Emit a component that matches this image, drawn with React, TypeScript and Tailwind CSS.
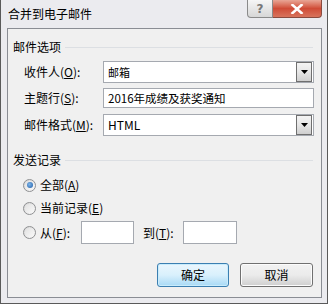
import React from "react";

function Arrow() {
  return (
    <div className="w-[16px] h-full border border-[#6f6f6f] bg-gradient-to-b from-[#f4f4f4] via-[#e6e6e6] to-[#cfcfcf] flex items-center justify-center">
      <svg width="7" height="4" viewBox="0 0 7 4">
        <path d="M0 0 L7 0 L3.5 4 Z" fill="#000" />
      </svg>
    </div>
  );
}

function Radio({ checked }: { checked?: boolean }) {
  return (
    <div className="w-[13px] h-[13px] rounded-full border border-[#8f9092] bg-gradient-to-br from-[#d6d6d6] to-[#fbfbfb] flex items-center justify-center">
      <div className="w-[9px] h-[9px] rounded-full bg-gradient-to-br from-[#e2e2e2] to-[#f8f8f8] flex items-center justify-center">
        {checked && (
          <div className="w-[6px] h-[6px] rounded-full bg-[radial-gradient(circle_at_40%_40%,#7fb6ea,#1c5ba6)]" />
        )}
      </div>
    </div>
  );
}

export default function App() {
  return (
    <div className="w-[329px] h-[305px] bg-white font-['Noto_Sans_CJK_SC',sans-serif] text-black">
      <div className="w-[328px] h-[304px] bg-[#ebebef] border-x border-b border-[#5a5a5a] flex flex-col">
        {/* Title bar */}
        <div className="h-[28px] flex items-start">
          <div className="pl-[7px] pt-[6px] text-[12px] leading-[16px]">合并到电子邮件</div>
          <div className="ml-auto mr-[5px] flex">
            <div className="w-[26px] h-[18px] border border-t-0 border-[#8a8a8a] rounded-bl-[4px] bg-gradient-to-b from-[#f6f6f6] to-[#d7d7d7] flex items-center justify-center text-[12px] leading-none text-[#777] font-bold font-['DejaVu_Sans',sans-serif]">
              ?
            </div>
            <div className="w-[49px] h-[18px] border border-t-0 border-l-0 border-[#8a4a3e] rounded-br-[4px] bg-gradient-to-b from-[#e8a595] via-[#cf4b36] to-[#d8735c] flex items-center justify-center">
              <svg width="14" height="10" viewBox="0 0 14 10">
                <path d="M2.5 1 L11.5 9 M11.5 1 L2.5 9" stroke="#fff" strokeWidth="2.6" strokeLinecap="square" />
              </svg>
            </div>
          </div>
        </div>

        {/* Client area */}
        <div className="ml-[6px] w-[315px] h-[270px] border border-[#8a8d94] bg-[#f0f0f0] flex flex-col text-[12px] leading-[16px]">
          {/* Group 1 header */}
          <div className="mt-[10px] pl-[5px] pr-[8px] h-[16px] flex items-center">
            <span>邮件选项</span>
            <div className="flex-1 ml-[4px] h-px bg-[#dcdfe3]" />
          </div>

          {/* Row 1 */}
          <div className="mt-[6px] pl-[16px] h-[22px] flex items-center">
            <div className="w-[79px]">
              收件人(<span className="underline">O</span>):
            </div>
            <div className="w-[211px] h-[22px] border border-[#a5a9b0] bg-white flex items-center">
              <span className="pl-[4px] flex-1 text-[11px]">邮箱</span>
              <div className="h-[20px] pr-px">
                <Arrow />
              </div>
            </div>
          </div>

          {/* Row 2 */}
          <div className="mt-[5px] pl-[16px] h-[20px] flex items-center">
            <div className="w-[79px]">
              主题行(<span className="underline">S</span>):
            </div>
            <div className="w-[211px] h-[20px] border border-[#a5a9b0] bg-white flex items-center">
              <span className="pl-[4px] text-[11.5px]">2016年成绩及获奖通知</span>
            </div>
          </div>

          {/* Row 3 */}
          <div className="mt-[6px] pl-[16px] h-[22px] flex items-center">
            <div className="w-[79px]">
              邮件格式(<span className="underline">M</span>):
            </div>
            <div className="w-[211px] h-[22px] border border-[#a5a9b0] bg-white flex items-center">
              <span className="pl-[4px] flex-1 text-[12px]">HTML</span>
              <div className="h-[20px] pr-px">
                <Arrow />
              </div>
            </div>
          </div>

          {/* Group 2 header */}
          <div className="mt-[16px] pl-[5px] pr-[8px] h-[16px] flex items-center">
            <span>发送记录</span>
            <div className="flex-1 ml-[4px] h-px bg-[#dcdfe3]" />
          </div>

          <div className="mt-[9px] pl-[15px] h-[16px] flex items-center gap-[4px]">
            <Radio checked />
            <span>
              全部(<span className="underline">A</span>)
            </span>
          </div>

          <div className="mt-[7px] pl-[15px] h-[16px] flex items-center gap-[4px]">
            <Radio />
            <span>
              当前记录(<span className="underline">E</span>)
            </span>
          </div>

          <div className="mt-[5px] pl-[15px] h-[23px] flex items-center">
            <Radio />
            <span className="ml-[4px] w-[41px]">
              从(<span className="underline">F</span>):
            </span>
            <div className="w-[53px] h-[23px] border border-[#a5a9b0] bg-white" />
            <span className="ml-[9px] w-[40px]">
              到(<span className="underline">T</span>):
            </span>
            <div className="w-[54px] h-[23px] border border-[#a5a9b0] bg-white" />
          </div>

          {/* Buttons */}
          <div className="mt-[19px] pr-[8px] flex justify-end gap-[11px]">
            <div className="w-[72px] h-[24px] rounded-[3px] border border-[#3c7fb1] bg-gradient-to-b from-[#eaf6fd] via-[#d9f0fc] to-[#a7d9f5] shadow-[inset_0_0_0_1px_#c9ecfc] flex items-center justify-center">
              确定
            </div>
            <div className="w-[73px] h-[24px] rounded-[3px] border border-[#707070] bg-gradient-to-b from-[#f2f2f2] via-[#ebebeb] to-[#cfcfcf] shadow-[inset_0_0_0_1px_#fcfcfc] flex items-center justify-center">
              取消
            </div>
          </div>
        </div>
      </div>
    </div>
  );
}
